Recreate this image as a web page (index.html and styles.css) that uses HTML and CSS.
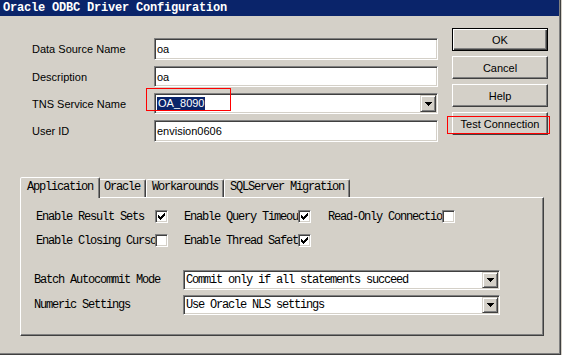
FILE: index.html
```html
<!DOCTYPE html>
<html lang="en">
<head>
<meta charset="UTF-8" />
<meta name="viewport" content="width=device-width, initial-scale=1" />
<title>Oracle ODBC Driver Configuration</title>
<link rel="stylesheet" href="styles.css">
</head>
<body>

<div class="window">
  <div class="titlebar">Oracle ODBC Driver Configuration</div>

  <div class="top">
    <div class="form">
      <label>Data Source Name</label>
      <div class="field">oa</div>

      <label>Description</label>
      <div class="field">oa</div>

      <label>TNS Service Name</label>
      <div class="field combo">
        <span class="selected">OA_8090</span>
        <span class="drop"><svg width="7" height="4" viewBox="0 0 7 4"><path d="M0 0h7v1h-1v1h-1v1h-1v1h-1v-1h-1v-1h-1v-1h-1z"/></svg></span>
      </div>

      <label>User ID</label>
      <div class="field">envision0606</div>
    </div>

    <div class="buttons">
      <div class="btn default">OK</div>
      <div class="btn">Cancel</div>
      <div class="btn">Help</div>
      <div class="btn">Test Connection</div>
    </div>
  </div>

  <div class="tabs">
    <div class="tab active">Application</div>
    <div class="tab">Oracle</div>
    <div class="tab">Workarounds</div>
    <div class="tab">SQLServer Migration</div>
  </div>

  <div class="panel">
    <div class="checks">
      <span class="lbl">Enable Result Sets</span>
      <span class="cb"><svg width="7" height="7" viewBox="0 0 7 7"><path d="M0 2h1v1h1v1h1v-1h1v-1h1v-1h1v-1h1v3h-1v1h-1v1h-1v1h-1v1h-1v-1h-1v-1h-1z"/></svg></span>
      <span></span>
      <span class="lbl">Enable Query Timeou</span>
      <span class="cb"><svg width="7" height="7" viewBox="0 0 7 7"><path d="M0 2h1v1h1v1h1v-1h1v-1h1v-1h1v-1h1v3h-1v1h-1v1h-1v1h-1v1h-1v-1h-1v-1h-1z"/></svg></span>
      <span></span>
      <span class="lbl">Read-Only Connectio</span>
      <span class="cb"></span>

      <span class="lbl">Enable Closing Curso</span>
      <span class="cb"></span>
      <span></span>
      <span class="lbl">Enable Thread Safet</span>
      <span class="cb"><svg width="7" height="7" viewBox="0 0 7 7"><path d="M0 2h1v1h1v1h1v-1h1v-1h1v-1h1v-1h1v3h-1v1h-1v1h-1v1h-1v1h-1v-1h-1v-1h-1z"/></svg></span>
    </div>

    <div class="selects">
      <span class="lbl">Batch Autocommit Mode</span>
      <div class="select">
        <span>Commit only if all statements succeed</span>
        <span class="drop"><svg width="7" height="4" viewBox="0 0 7 4"><path d="M0 0h7v1h-1v1h-1v1h-1v1h-1v-1h-1v-1h-1v-1h-1z"/></svg></span>
      </div>

      <span class="lbl">Numeric Settings</span>
      <div class="select">
        <span>Use Oracle NLS settings</span>
        <span class="drop"><svg width="7" height="4" viewBox="0 0 7 4"><path d="M0 0h7v1h-1v1h-1v1h-1v1h-1v-1h-1v-1h-1v-1h-1z"/></svg></span>
      </div>
    </div>
  </div>

  <!-- red annotation boxes drawn over the dialog -->
  <div class="mark mark-tns"></div>
  <div class="mark mark-test"></div>
</div>

</body>
</html>
```

FILE: styles.css
```css
body {
  margin: 0;
  background-color: #d4d0c8;
  font-family: 'Liberation Sans', Arial, sans-serif;
  font-size: 11px;
  color: #000;
}

.window {
  position: relative;
  width: 560px;
  height: 354px;
  border-right: 1px solid #404040;
  border-bottom: 1px solid #404040;
  box-shadow: inset -1px -1px #808080;
}

.titlebar {
  height: 16px;
  margin-right: 1px;
  padding-left: 3px;
  background-color: #0a246a;
  color: #fff;
  font-family: 'Liberation Mono', monospace;
  font-weight: bold;
  font-size: 12px;
  letter-spacing: -0.2px;
  line-height: 16px;
}

.top {
  display: flex;
  padding: 12px 0 0 32px;
}

.form {
  display: grid;
  grid-template-columns: 122px 284px;
  grid-template-rows: 22px 21px 21px 22px;
  row-gap: 6px;
  align-items: center;
  margin-top: 10px;
}

.field {
  box-sizing: border-box;
  height: 100%;
  display: flex;
  align-items: center;
  padding-left: 2px;
  background-color: #fff;
  border: 1px solid;
  border-color: #808080 #fff #fff #808080;
  box-shadow: inset 1px 1px #404040, inset -1px -1px #d4d0c8;
  font-size: 11px;
}

.combo .selected {
  background-color: #0a246a;
  color: #fff;
  padding: 0 1px;
  line-height: 13px;
}

.drop {
  box-sizing: border-box;
  width: 16px;
  height: 17px;
  margin-left: auto;
  margin-right: 1px;
  display: flex;
  align-items: center;
  justify-content: center;
  background-color: #d4d0c8;
  border: 1px solid;
  border-color: #d4d0c8 #404040 #404040 #d4d0c8;
  box-shadow: inset 1px 1px #fff, inset -1px -1px #808080;
}

.drop svg { display: block; shape-rendering: crispEdges; }

.buttons {
  display: flex;
  flex-direction: column;
  gap: 5px;
  margin-left: 14px;
}

.btn {
  box-sizing: border-box;
  width: 96px;
  height: 23px;
  display: flex;
  align-items: center;
  justify-content: center;
  border: 1px solid;
  border-color: #fff #404040 #404040 #fff;
  box-shadow: inset -1px -1px #808080;
}

.btn.default {
  border-color: #000;
  box-shadow: inset 1px 1px #fff, inset -1px -1px #404040, inset -2px -2px #808080;
}

.tabs {
  display: flex;
  align-items: flex-end;
  margin: 35px 0 0 22px;
  font-family: 'Liberation Mono', monospace;
  font-size: 12px;
  letter-spacing: -1.2px;
}

.tab {
  box-sizing: border-box;
  height: 18px;
  padding: 0 5px;
  line-height: 15px;
  white-space: nowrap;
  border: 1px solid;
  border-bottom: none;
  border-color: #fff #404040 transparent #fff;
  border-radius: 2px 2px 0 0;
  box-shadow: inset -1px 0 #808080;
}

.tab.active {
  position: relative;
  z-index: 1;
  height: 21px;
  margin: 0 -2px -1px;
  padding: 0 6px;
  line-height: 18px;
  background-color: #d4d0c8;
}

.panel {
  box-sizing: border-box;
  width: 524px;
  height: 139px;
  margin-left: 20px;
  padding: 12px 0 0 15px;
  border: 1px solid;
  border-color: #fff #404040 #404040 #fff;
  box-shadow: inset -1px -1px #808080;
  font-family: 'Liberation Mono', monospace;
  font-size: 12px;
  letter-spacing: -1.2px;
}

.checks {
  display: grid;
  grid-template-columns: 119px 13px 16px 114px 13px 17px 114px 13px;
  grid-auto-rows: 13px;
  row-gap: 11px;
  align-items: center;
}

.lbl { white-space: nowrap; }

.cb {
  position: relative;
  box-sizing: border-box;
  width: 13px;
  height: 13px;
  display: flex;
  align-items: center;
  justify-content: center;
  background-color: #fff;
  border: 1px solid;
  border-color: #808080 #fff #fff #808080;
  box-shadow: inset 1px 1px #404040, inset -1px -1px #d4d0c8;
}

.cb svg { display: block; shape-rendering: crispEdges; }

.selects {
  display: grid;
  grid-template-columns: 149px 317px;
  grid-template-rows: 20px 20px;
  row-gap: 5px;
  align-items: center;
  margin: 23px 0 0 -2px;
}

.select {
  box-sizing: border-box;
  height: 20px;
  display: flex;
  align-items: center;
  padding-left: 2px;
  white-space: nowrap;
  background-color: #fff;
  border: 1px solid;
  border-color: #808080 #fff #fff #808080;
  box-shadow: inset 1px 1px #404040, inset -1px -1px #d4d0c8;
}

.select .drop { height: 16px; }

.mark {
  position: absolute;
  box-sizing: border-box;
  border: 1px solid #f00;
}

.mark-tns { left: 146px; top: 88px; width: 85px; height: 23px; }
.mark-test { left: 447px; top: 116px; width: 103px; height: 18px; }
```
